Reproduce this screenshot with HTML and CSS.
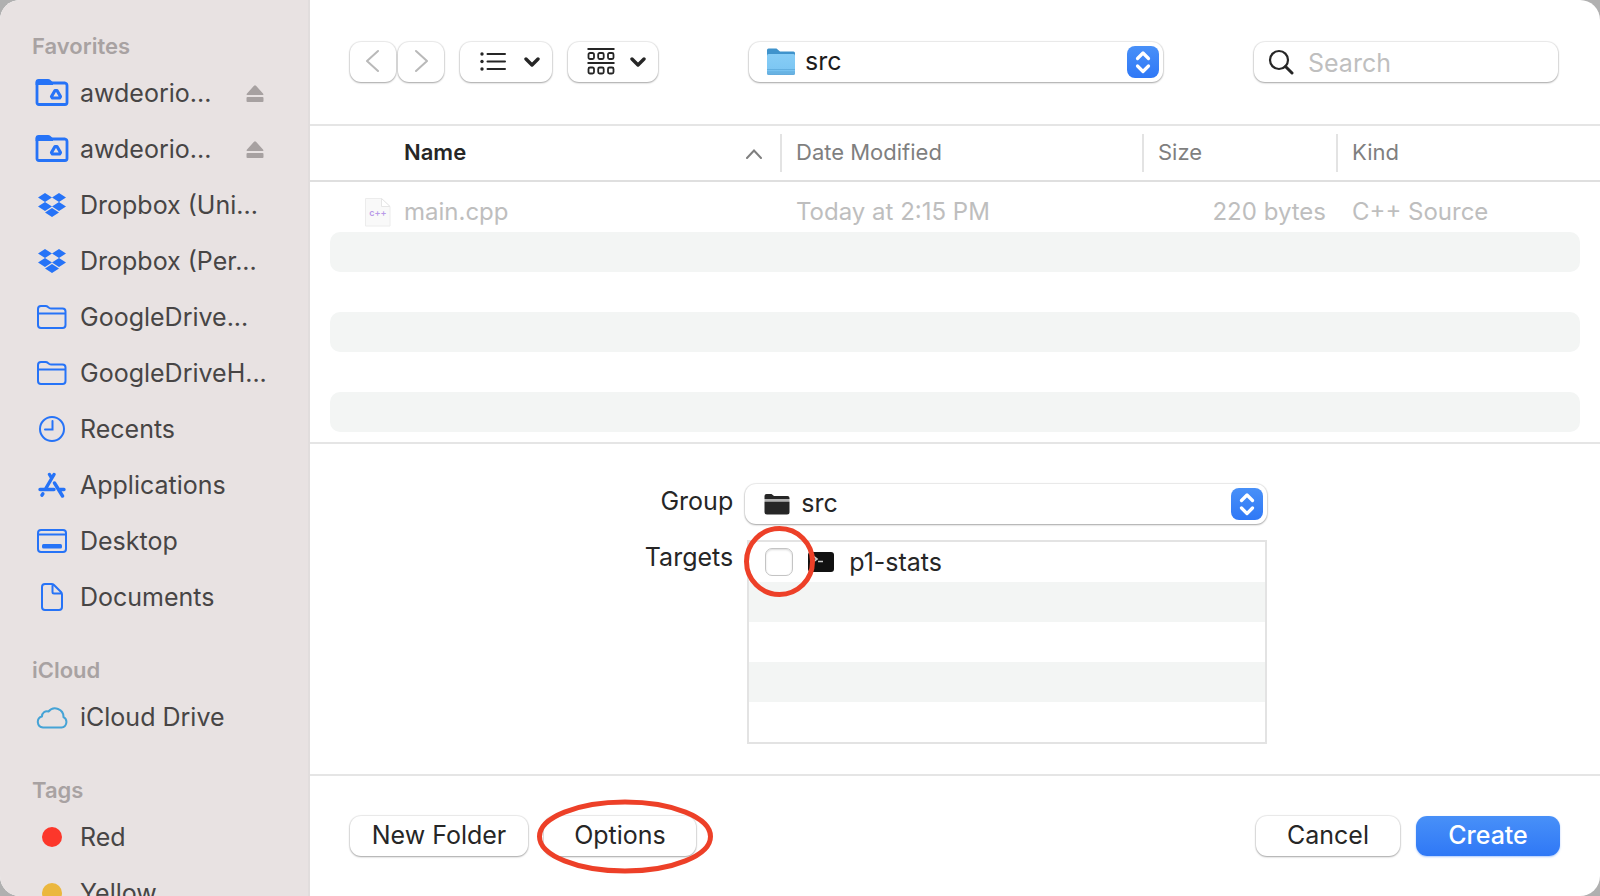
FILE: index.html
```html
<!DOCTYPE html>
<html lang="en">
<head>
<meta charset="utf-8">
<title>Create file</title>
<link rel="stylesheet" href="styles.css">
</head>
<body>
<svg class="defs" aria-hidden="true">
  <symbol id="drive" viewBox="0 0 34 28">
    <path d="M2 24V4H30Q32 4.500 32 6.500V23.500Q32 25.500 30 25.500H4Q2 25.500 2 23.500Z" fill="none" stroke="currentColor" stroke-width="2.800"/>
    <path d="M.6 6V3Q.6 0 3.600 0H13Q14.500 0 15.500 1L18 3.500V6Z" fill="currentColor"/>
    <path d="M20 11.500H22L25.500 17.500L24.500 19H17.500L16.500 17.500Z" fill="none" stroke="currentColor" stroke-width="3.200" stroke-linejoin="round"/>
  </symbol>
  <symbol id="dropbox" viewBox="0 0 28 24">
    <path d="M7 0L14 4.500L7 9L0 4.500ZM21 0L28 4.500L21 9L14 4.500ZM7 9L14 13.500L7 18L0 13.500ZM21 9L28 13.500L21 18L14 13.500ZM14 15L21 19.500L14 24L7 19.500Z" fill="currentColor"/>
  </symbol>
  <symbol id="folder" viewBox="0 0 30 24">
    <path d="M1 20V4Q1 1 4 1H8.500Q10 1 11 2L12 2.800Q13 3.500 14.500 3.500H25.500Q28.500 3.500 28.500 6.500V20Q28.500 23 25.500 23H4Q1 23 1 20ZM1 8.500H28.500" fill="none" stroke="currentColor" stroke-width="2"/>
  </symbol>
  <symbol id="clock" viewBox="0 0 26 26">
    <circle cx="13" cy="13" r="12" fill="none" stroke="currentColor" stroke-width="2"/>
    <path d="M13.500 5V13.500H6" fill="none" stroke="currentColor" stroke-width="2" stroke-linecap="round"/>
  </symbol>
  <symbol id="apps" viewBox="0 0 28 26">
    <path d="M16 2.500L7.500 17M11.500 2.500L13.700 6.200M16.500 11L24.500 24M4.800 21.800L4 23.200M2 17.500H16M22 17.500H26" fill="none" stroke="currentColor" stroke-width="3.400" stroke-linecap="round"/>
  </symbol>
  <symbol id="desktop" viewBox="0 0 30 24">
    <rect x="1" y="1" width="28" height="22" rx="3" fill="none" stroke="currentColor" stroke-width="2"/>
    <path d="M1 5.500H29" stroke="currentColor" stroke-width="2"/>
    <rect x="5" y="15" width="20" height="4.500" rx="1.500" fill="currentColor"/>
  </symbol>
  <symbol id="document" viewBox="0 0 22 28">
    <path d="M1 24V4Q1 1 4 1H10.500Q12 1 13 2L20 9Q21 10 21 11.500V24Q21 27 18 27H4Q1 27 1 24ZM11.500 1V9Q11.500 10.500 13 10.500H20.500" fill="none" stroke="currentColor" stroke-width="2"/>
  </symbol>
  <symbol id="cloud" viewBox="0 0 32 23">
    <path d="M7 21.500H25.500A5.500 5.500 0 0 0 27.500 11.200A8.500 8.500 0 0 0 12.500 5.500A5 5 0 0 0 6 10.500A5.600 5.600 0 0 0 7 21.500Z" fill="none" stroke="currentColor" stroke-width="2" stroke-linejoin="round"/>
  </symbol>
  <symbol id="dot" viewBox="0 0 20 20"><circle cx="10" cy="10" r="10" fill="currentColor"/></symbol>
  <symbol id="eject" viewBox="0 0 18 18">
    <path d="M8 .8Q9 -.3 10 .8L17 8.500Q18 10 16.500 10H1.500Q0 10 1 8.500Z" fill="currentColor"/>
    <rect x="0.500" y="12" width="17" height="5" rx="1" fill="currentColor"/>
  </symbol>
  <symbol id="chevron" viewBox="0 0 16 10">
    <path d="M2 2L8 8L14 2" fill="none" stroke="currentColor" stroke-width="3.400" stroke-linecap="round" stroke-linejoin="round"/>
  </symbol>
  <symbol id="stepper" viewBox="0 0 32 32">
    <path d="M10.500 12.500L16 7L21.500 12.500M10.500 20L16 25.500L21.500 20" fill="none" stroke="#fff" stroke-width="3.200" stroke-linecap="round" stroke-linejoin="round"/>
  </symbol>
</svg>

<div class="window">
  <nav class="sidebar" aria-label="Places">
    <h2 class="heading">Favorites</h2>
    <ul class="places">
      <li class="place"><a class="link" href="#"><svg class="icon icon-wide"><use href="#drive"/></svg>awdeorio...</a><button class="eject" aria-label="Eject"><svg width="18" height="18"><use href="#eject"/></svg></button></li>
      <li class="place"><a class="link" href="#"><svg class="icon icon-wide"><use href="#drive"/></svg>awdeorio...</a><button class="eject" aria-label="Eject"><svg width="18" height="18"><use href="#eject"/></svg></button></li>
      <li class="place"><a class="link" href="#"><svg class="icon icon-box"><use href="#dropbox"/></svg>Dropbox (Uni...</a></li>
      <li class="place"><a class="link" href="#"><svg class="icon icon-box"><use href="#dropbox"/></svg>Dropbox (Per...</a></li>
      <li class="place"><a class="link" href="#"><svg class="icon icon-flat"><use href="#folder"/></svg>GoogleDrive...</a></li>
      <li class="place"><a class="link" href="#"><svg class="icon icon-flat"><use href="#folder"/></svg>GoogleDriveH...</a></li>
      <li class="place"><a class="link" href="#"><svg class="icon icon-round"><use href="#clock"/></svg>Recents</a></li>
      <li class="place"><a class="link" href="#"><svg class="icon icon-round"><use href="#apps"/></svg>Applications</a></li>
      <li class="place"><a class="link" href="#"><svg class="icon icon-flat"><use href="#desktop"/></svg>Desktop</a></li>
      <li class="place"><a class="link" href="#"><svg class="icon icon-tall"><use href="#document"/></svg>Documents</a></li>
    </ul>
    <h2 class="heading">iCloud</h2>
    <ul class="places">
      <li class="place"><a class="link" href="#"><svg class="icon icon-cloud"><use href="#cloud"/></svg>iCloud Drive</a></li>
    </ul>
    <h2 class="heading">Tags</h2>
    <ul class="places">
      <li class="place"><a class="link" href="#"><svg class="icon icon-dot red"><use href="#dot"/></svg>Red</a></li>
      <li class="place"><a class="link" href="#"><svg class="icon icon-dot yellow"><use href="#dot"/></svg>Yellow</a></li>
    </ul>
  </nav>

  <main class="main">
    <header class="toolbar">
      <div class="tools">
        <div class="history">
          <button class="button nav" aria-label="Back" disabled><svg width="14" height="24" viewBox="0 0 14 24"><path d="M12 2L1 12L12 22" fill="none" stroke="currentColor" stroke-width="2" stroke-linecap="round" stroke-linejoin="round"/></svg></button>
          <button class="button nav" aria-label="Forward" disabled><svg width="14" height="24" viewBox="0 0 14 24"><path d="M2 2L13 12L2 22" fill="none" stroke="currentColor" stroke-width="2" stroke-linecap="round" stroke-linejoin="round"/></svg></button>
        </div>
        <button class="button view view-list" aria-label="List view">
          <svg width="26" height="28" viewBox="0 0 26 28"><path d="M7.500 6H25M7.500 13.500H25M7.500 21H25" stroke="currentColor" stroke-width="2" stroke-linecap="round"/><g fill="currentColor"><circle cx="2" cy="6" r="1.700"/><circle cx="2" cy="13.500" r="1.700"/><circle cx="2" cy="21" r="1.700"/></g></svg>
          <svg class="caret"><use href="#chevron"/></svg>
        </button>
        <button class="button view view-group" aria-label="Group items">
          <svg width="28" height="28" viewBox="0 0 28 28"><g fill="none" stroke="currentColor" stroke-width="1.800"><path d="M0.500 1H27.500M0.500 15H27.500"/><rect x="1.500" y="5" width="5.500" height="6" rx="1.500"/><rect x="11.200" y="5" width="5.500" height="6" rx="1.500"/><rect x="21" y="5" width="5.500" height="6" rx="1.500"/><rect x="1.500" y="19.500" width="5.500" height="6" rx="1.500"/><rect x="11.200" y="19.500" width="5.500" height="6" rx="1.500"/><rect x="21" y="19.500" width="5.500" height="6" rx="1.500"/></g></svg>
          <svg class="caret"><use href="#chevron"/></svg>
        </button>
      </div>
      <div class="picker location">
        <svg class="picker-icon" width="30" height="28" viewBox="0 0 30 28"><defs><linearGradient id="blue" x1="0" y1="0" x2="0" y2="1"><stop offset="0" stop-color="#87cdf6"/><stop offset=".75" stop-color="#7cc6f3"/><stop offset="1" stop-color="#62aadb"/></linearGradient></defs><path d="M1 9V2Q1 .500 2.500 .500H10.500L14 3.500H27.500Q29 3.500 29 5V9Z" fill="#3f93cc"/><path d="M1 7.500Q1 6 2.500 6H27.500Q29 6 29 7.500V25.500Q29 27 27.500 27H2.500Q1 27 1 25.500Z" fill="url(#blue)"/><path d="M1 21.500H29M1 24H29" stroke="#62afe0"/></svg>
        <select class="select" aria-label="Location"><option>src</option></select>
        <svg class="stepper"><use href="#stepper"/></svg>
      </div>
      <label class="search">
        <svg width="26" height="26" viewBox="0 0 26 26"><circle cx="11" cy="11" r="9" fill="none" stroke="currentColor" stroke-width="2.200"/><path d="M17.500 17.500L24 24" stroke="currentColor" stroke-width="3" stroke-linecap="round"/></svg>
        <input class="search-input" type="search" placeholder="Search" aria-label="Search">
      </label>
    </header>

    <section class="files">
      <table class="table">
        <colgroup><col><col class="col-date"><col class="col-size"><col class="col-kind"></colgroup>
        <thead>
          <tr>
            <th class="th sorted"><div class="th-box">Name<svg class="sort" viewBox="0 0 16 10"><path d="M1 9L8 1.500L15 9" fill="none" stroke="#7f7f7f" stroke-width="2" stroke-linecap="round"/></svg></div></th>
            <th class="th"><div class="th-box">Date Modified</div></th>
            <th class="th"><div class="th-box">Size</div></th>
            <th class="th"><div class="th-box">Kind</div></th>
          </tr>
        </thead>
        <tbody>
          <tr class="row file">
            <td><div class="file-name"><svg width="26" height="30" viewBox="0 0 26 30"><path d="M.5 1.500H16.500L25 9.500V29H.5Z" fill="#f9f9f9" stroke="#ececec"/><path d="M16.500 1.500V9.500H25Z" fill="#fff" stroke="#e6e6e6"/><text x="13" y="19" class="cpp">c++</text></svg>main.cpp</div></td>
            <td>Today at 2:15 PM</td><td class="size">220 bytes</td><td>C++ Source</td>
          </tr>
          <tr class="row"><td></td><td></td><td></td><td></td></tr>
          <tr class="row"><td></td><td></td><td></td><td></td></tr>
          <tr class="row"><td></td><td></td><td></td><td></td></tr>
          <tr class="row"><td></td><td></td><td></td><td></td></tr>
          <tr class="row"><td></td><td></td><td></td><td></td></tr>
        </tbody>
      </table>
    </section>

    <section class="form">
      <label class="form-label" for="group">Group</label>
      <div class="picker">
        <svg class="picker-icon" width="26" height="22" viewBox="0 0 26 22"><path d="M0.500 6V3Q.5 1 2.500 1H7.500L10 3H23.500Q25.500 3 25.500 5V6Z" fill="#262626"/><path d="M0.500 7H25.500" stroke="#999" stroke-width="1.500"/><path d="M0.500 8.500H25.500V19Q25.500 21.500 23 21.500H3Q.5 21.500 .5 19Z" fill="#262626"/></svg>
        <select class="select" id="group"><option>src</option></select>
        <svg class="stepper"><use href="#stepper"/></svg>
      </div>
      <span class="form-label">Targets</span>
      <ul class="targets" aria-label="Targets">
        <li class="target">
          <span class="marked"><input class="checkbox" type="checkbox" id="p1"><svg class="ring ring-check" viewBox="0 0 72 72"><circle cx="36.500" cy="35.500" r="33" fill="none" stroke="#ed4028" stroke-width="5"/></svg></span>
          <label class="target-label" for="p1"><svg width="26" height="20" viewBox="0 0 26 20"><rect width="26" height="20" rx="3" fill="#111"/><path d="M5 4L9 7L5 10M10 9.500H15" fill="none" stroke="#ccc" stroke-width="1.600"/></svg>p1-stats</label>
        </li>
        <li class="target"></li><li class="target"></li><li class="target"></li><li class="target"></li>
      </ul>
    </section>

    <footer class="actions">
      <button class="button new-folder">New Folder</button>
      <span class="marked"><button class="button options">Options</button><svg class="ring ring-options" viewBox="0 0 176 76"><ellipse cx="88" cy="37.500" rx="85.500" ry="34.500" fill="none" stroke="#ed4028" stroke-width="5"/></svg></span>
      <button class="button cancel">Cancel</button>
      <button class="button create">Create</button>
    </footer>
  </main>
</div>
</body>
</html>
```
FILE: styles.css
```css
* { box-sizing: border-box; }
body { margin: 0; background: #b0b0b0; color: #262626; font: 420 25px/32px Inter, "Liberation Sans", sans-serif; }
button, input, select { font: inherit; color: inherit; }
button { border: 0; padding: 0; background: none; }
svg { flex: none; }
ul { list-style: none; margin: 0; padding: 0; }
.defs { position: absolute; width: 0; height: 0; }

.window { display: flex; height: 100vh; overflow: hidden; border-radius: 20px; background: #fff; }

.sidebar { flex: none; width: 310px; padding-top: 1px; background: #e8e2e2; border-right: 2px solid #e1dddd; overflow: hidden; }
.heading { margin: 0; padding: 31px 32px 5px; color: #a8a2a2; font-size: 22px; line-height: 28px; font-weight: 600; }
.place { display: flex; align-items: center; height: 56px; padding: 0 44px 0 35px; }
.link { flex: 1; display: flex; align-items: center; gap: 11px; color: #474545; text-decoration: none; white-space: nowrap; }
.icon { width: 34px; color: #2673f7; }
.icon-wide { height: 28px; }
.icon-box, .icon-flat { height: 24px; }
.icon-round { height: 26px; }
.icon-tall { height: 28px; }
.icon-cloud { height: 23px; color: #45a3d6; }
.icon-dot { height: 20px; }
.red { color: #fc372b; }
.yellow { color: #ebb73e; }
.eject { display: flex; padding-top: 2px; color: #a7a1a1; }

.main { flex: 1; min-width: 0; display: flex; flex-direction: column; }
.toolbar { display: flex; justify-content: space-between; padding: 42px 42px 42px 40px; border-bottom: 2px solid #e5e5e5; }
.tools { display: flex; gap: 16px; }
.history { display: flex; gap: 2px; }
.button, .picker, .search { height: 40px; border-radius: 11px; background: #fff; box-shadow: 0 0 1px 1px rgba(0,0,0,.08), 0 1px 2px rgba(0,0,0,.3); }
.button { display: flex; align-items: center; justify-content: center; padding-bottom: 2px; }
.nav { width: 46px; color: #b9b9b9; }
.view { justify-content: space-between; padding: 0 12px 0 20px; }
.view-list { width: 92px; }
.view-group { width: 90px; padding-left: 19px; }
.caret { width: 16px; height: 10px; }

.picker { display: grid; grid-template-columns: 64px 1fr 36px; align-items: center; }
.picker-icon, .stepper { grid-row: 1; z-index: 1; pointer-events: none; }
.picker-icon { grid-column: 1; justify-self: center; }
.select { grid-row: 1; grid-column: 1 / -1; height: 40px; padding: 0 40px 2px 56px; border: 0; border-radius: 11px; background: none; appearance: none; }
.stepper { grid-column: 3; width: 32px; height: 32px; border-radius: 8px; background: linear-gradient(#4890f8, #2f78f6); }
.location { width: 414px; color: #1c1c1c; }

.search { display: flex; align-items: center; gap: 14px; width: 304px; padding: 0 14px; }
.search-input { flex: 1; min-width: 0; padding: 2px 0 0; border: 0; background: none; outline: none; }
.search-input::placeholder { color: #bfbfbf; }

.files { flex: 1; border-bottom: 2px solid #e5e5e5; }
.table { width: 100%; table-layout: fixed; border-collapse: separate; border-spacing: 0; }
.col-date { width: 362px; }
.col-size { width: 194px; }
.col-kind { width: 262px; }
.th { height: 56px; padding: 0; border-bottom: 2px solid #dfdfdf; color: #7f7f7f; font-size: 22px; font-weight: 420; text-align: left; }
.th-box { display: flex; align-items: center; justify-content: space-between; height: 38px; padding: 0 18px 2px 14px; border-right: 2px solid #e3e3e3; }
.th:last-child .th-box { border-right: 0; }
.sorted { color: #262626; font-weight: 600; }
.sorted .th-box { padding-left: 94px; }
.sort { width: 16px; height: 10px; margin-top: 4px; }
.row td { height: 40px; padding: 0 12px 0 14px; background-clip: padding-box; }
.row td:first-child { padding-left: 35px; border-left: 20px solid transparent; border-radius: 30px 0 0 30px / 10px 0 0 10px; }
.row td:last-child { border-right: 20px solid transparent; border-radius: 0 30px 30px 0 / 0 10px 10px 0; }
.row:nth-child(even) td { background-color: #f3f5f4; }
.file td { height: 50px; padding-top: 10px; color: #bebebe; font-size: 24px; font-weight: 400; }
.file-name { display: flex; align-items: center; gap: 13px; }
.row .size { text-align: right; }
.cpp { font-size: 9px; font-weight: 600; text-anchor: middle; fill: #b99be8; }

.form { display: grid; grid-template-columns: auto 522px; justify-content: center; gap: 16px 12px; padding: 40px 0 30px 2px; border-bottom: 2px solid #e5e5e5; }
.form-label { line-height: 34px; text-align: right; }
.targets { margin-left: 2px; border: 2px solid #e3e3e3; }
.target { display: flex; align-items: center; gap: 15px; height: 40px; padding-left: 16px; }
.target:nth-child(even) { background: #f3f5f4; }
.target-label { display: flex; align-items: center; gap: 15px; }
.checkbox { display: block; width: 28px; height: 28px; margin: 0; appearance: none; border: 1px solid #c4c4c4; border-radius: 7px; background: #fff; box-shadow: inset 0 1px 2px rgba(0,0,0,.15); }
.marked { position: relative; }
.ring { position: absolute; z-index: 2; pointer-events: none; }
.ring-check { left: -22px; top: -22px; width: 72px; height: 72px; }
.ring-options { left: -7px; top: -17px; width: 176px; height: 76px; }

.actions { display: flex; gap: 16px; padding: 40px; }
.new-folder { width: 178px; }
.options { width: 152px; }
.cancel { width: 144px; margin-left: auto; }
.create { width: 144px; color: #fff; font-weight: 500; background: linear-gradient(#4890f8, #2f78f6); box-shadow: 0 1px 2px rgba(47,120,246,.4); }
```
